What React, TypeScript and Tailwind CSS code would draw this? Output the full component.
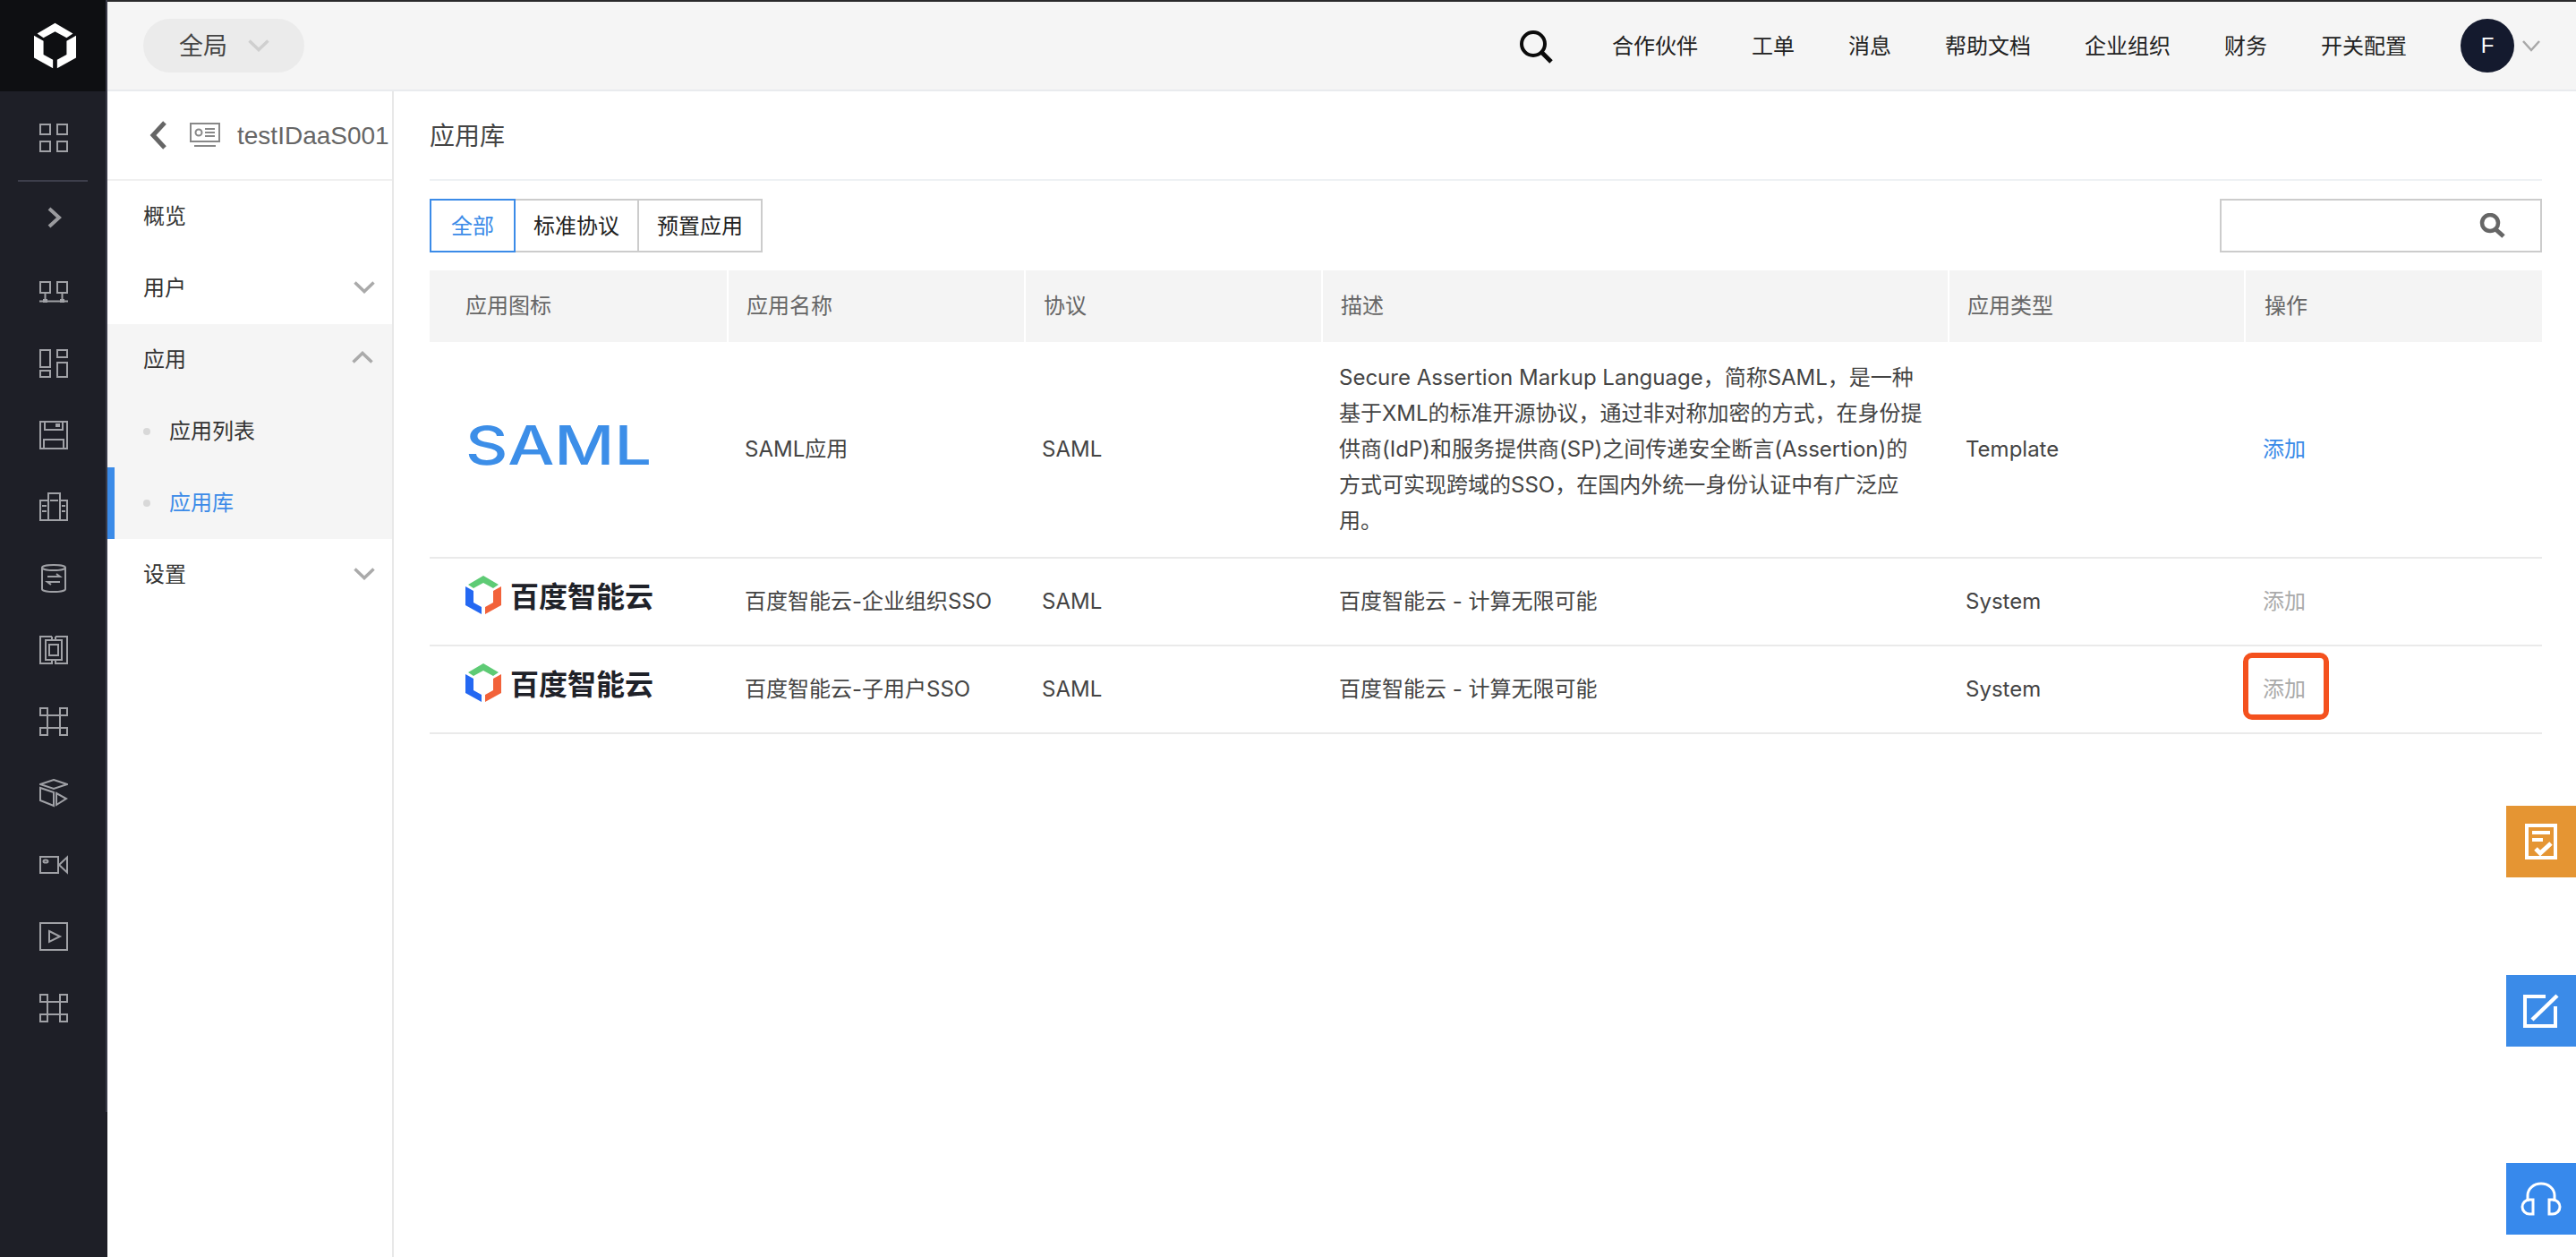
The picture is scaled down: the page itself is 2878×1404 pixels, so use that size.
import React from "react";

const S = ({ children }: { children: React.ReactNode }) => (
  <svg width="32" height="32" viewBox="0 0 32 32" fill="none" stroke="#a0a1a6" strokeWidth="2">
    {children}
  </svg>
);

const CmdIcon = () => (
  <S>
    <rect x="1" y="1" width="8" height="8" />
    <rect x="23" y="1" width="8" height="8" />
    <rect x="1" y="23" width="8" height="8" />
    <rect x="23" y="23" width="8" height="8" />
    <path d="M9 9H23V23H9Z" />
  </S>
);

const railIcons: React.ReactNode[] = [
  <S key="net">
    <rect x="1" y="5" width="11" height="12" />
    <rect x="20" y="5" width="11" height="12" />
    <path d="M6.5 17V26M25.5 17V26M0 26.5H32" />
    <rect x="4" y="24" width="5" height="4" fill="#a0a1a6" stroke="none" />
    <rect x="23" y="24" width="5" height="4" fill="#a0a1a6" stroke="none" />
  </S>,
  <S key="dash">
    <rect x="1" y="1" width="11" height="19" />
    <rect x="1" y="24" width="11" height="7" />
    <rect x="20" y="1" width="11" height="8" />
    <rect x="20" y="15" width="11" height="16" />
  </S>,
  <S key="floppy">
    <rect x="1" y="1" width="30" height="30" />
    <path d="M6 1V10H26V1M5 31V21H27V31" />
    <rect x="18" y="3" width="5" height="4" fill="#a0a1a6" stroke="none" />
  </S>,
  <S key="building">
    <rect x="10" y="1" width="13" height="30" />
    <path d="M10 9H1V31H10M23 9H31V31H23M12 9H21M3 15H8M3 21H8M25 15H29M25 21H29" />
  </S>,
  <S key="db">
    <ellipse cx="16" cy="4" rx="13" ry="3" />
    <path d="M3 4V28A13 3 0 0 0 29 28V4M9 14H23L19 11M23 20H9L13 23" />
  </S>,
  <S key="concentric">
    <path d="M14 1H1V31H14V27M18 1H31V31H18V27M14 1V5M18 1V5" />
    <rect x="7" y="5" width="18" height="22" />
    <rect x="11" y="10" width="10" height="12" />
  </S>,
  <CmdIcon key="cmd1" />,
  <S key="box">
    <path d="M16 1L31 6L16 11L1 6Z" />
    <path d="M1 10V24L16 30V15Z" />
    <path d="M19 16L30 22L19 29Z" />
  </S>,
  <S key="cam">
    <rect x="1" y="7" width="20" height="18" />
    <ellipse cx="7" cy="12" rx="2.5" ry="1.6" />
    <path d="M22 16L31 7.5V24.5Z" />
  </S>,
  <S key="play">
    <rect x="1" y="1" width="30" height="30" />
    <path d="M11 10L23 16L11 22Z" />
  </S>,
  <CmdIcon key="cmd2" />,
];

const Chevron = ({ up, cls }: { up?: boolean; cls: string }) => (
  <svg width="24" height="14" viewBox="0 0 24 14" fill="none" stroke="currentColor" strokeWidth="3.5" className={cls}>
    <path d={up ? "M1.5 12.5L12 2.5L22.5 12.5" : "M1.5 1.5L12 11.5L22.5 1.5"} />
  </svg>
);

const HexMark = ({ w, h, top, left, right }: { w: number; h: number; top: string; left: string; right: string }) => (
  <svg width={w} height={h} viewBox="0 0 40 43" className="shrink-0">
    <path d="M20 0L37 10L31 14L20 8L9 14L3 10Z" fill={top} />
    <path d="M0 12L9 17V30L18 35V43L0 33Z" fill={left} />
    <path d="M40 12L31 17V30L22 35V43L40 33Z" fill={right} />
  </svg>
);

const BaiduLogo = () => (
  <div className="flex items-center gap-[10px] pb-[16px] pl-10">
    <HexMark w={40} h={43} top="#5ecb75" left="#2468f2" right="#f2623a" />
    <span className="text-[32px] leading-none font-bold text-[#1f2229] font-['Noto_Sans_CJK_SC',sans-serif]">
      百度智能云
    </span>
  </div>
);

const SamlLogo = () => (
  <div className="pb-[10px] pl-10">
    <svg width="212" height="64" viewBox="0 0 212 64" className="overflow-visible">
      <text
        x="0"
        y="54"
        textLength="208"
        lengthAdjust="spacingAndGlyphs"
        fontSize="60"
        fontWeight="500"
        fontFamily="Inter, sans-serif"
        fill="#3c8ee8"
      >
        SAML
      </text>
    </svg>
  </div>
);

const cols = "grid grid-cols-[334px_332px_332px_700px_331px_331px]";
const cell = "flex items-center pl-[18px]";

const rows = [
  {
    h: "h-[242px]",
    logo: <SamlLogo />,
    name: "SAML应用",
    desc: "Secure Assertion Markup Language，简称SAML，是一种基于XML的标准开源协议，通过非对称加密的方式，在身份提供商(IdP)和服务提供商(SP)之间传递安全断言(Assertion)的方式可实现跨域的SSO，在国内外统一身份认证中有广泛应用。",
    type: "Template",
    active: true,
  },
  {
    h: "h-[98px]",
    logo: <BaiduLogo />,
    name: "百度智能云-企业组织SSO",
    desc: "百度智能云 - 计算无限可能",
    type: "System",
    active: false,
  },
  {
    h: "h-[98px]",
    logo: <BaiduLogo />,
    name: "百度智能云-子用户SSO",
    desc: "百度智能云 - 计算无限可能",
    type: "System",
    active: false,
    boxed: true,
  },
];

const navItems = ["合作伙伴", "工单", "消息", "帮助文档", "企业组织", "财务", "开关配置"];
const heads: [string, string][] = [
  ["应用图标", "pl-10"],
  ["应用名称", "pl-5"],
  ["协议", "pl-5"],
  ["描述", "pl-5"],
  ["应用类型", "pl-5"],
  ["操作", "pl-[21px]"],
];

export default function App() {
  return (
    <div className="relative flex h-[1404px] w-[2878px] overflow-hidden bg-white font-['Liberation_Sans','Noto_Sans_CJK_SC',sans-serif] text-[24px] text-[#333]">
      {/* icon rail */}
      <aside className="h-full w-[120px] shrink-0 bg-[#1e1f27]">
        <div className="flex h-[1242px] flex-col border-r-[2px] border-[#3a3b48]">
          <div className="flex h-[102px] shrink-0 items-center justify-center bg-[#0e0f12] pl-[5px]">
            <HexMark w={47} h={52} top="#fff" left="#fff" right="#fff" />
          </div>
          <div className="mt-3 flex h-[80px] items-center justify-center pl-[2px]">
            <S>
              <rect x="1" y="1" width="11" height="11" />
              <rect x="20" y="1" width="11" height="11" />
              <rect x="1" y="20" width="11" height="11" />
              <rect x="20" y="20" width="11" height="11" />
            </S>
          </div>
          <div className="mx-5 mt-[7px] h-[2px] bg-[#3d3e4b]" />
          <div className="flex h-[80px] items-center justify-center pl-[4px]">
            <svg width="16" height="24" viewBox="0 0 16 24" fill="none" stroke="#9a9a9e" strokeWidth="4">
              <path d="M2 2L13 12L2 22" />
            </svg>
          </div>
          <div className="mt-[3px] flex flex-col">
            {railIcons.map((ic, i) => (
              <div key={i} className="flex h-[80px] items-center justify-center pl-[2px]">
                {ic}
              </div>
            ))}
          </div>
        </div>
      </aside>

      <div className="flex h-full min-w-0 flex-1 flex-col">
        <div className="h-[2px] shrink-0 bg-[#2a2a2c]" />
        {/* top bar */}
        <header className="flex h-[100px] shrink-0 items-center border-b-[2px] border-[#e9ebee] bg-[#f5f5f5] pl-10 pr-10">
          <div className="flex h-[60px] w-[180px] items-center rounded-full bg-[#ebebeb] pl-10">
            <span className="pt-[2px] text-[27px] leading-none text-[#444]">全局</span>
            <Chevron cls="ml-[23px] text-[#cfcfcf]" />
          </div>
          <svg width="37" height="37" viewBox="0 0 37 37" fill="none" stroke="#0b0b0b" className="ml-auto mt-[2px]">
            <circle cx="15" cy="15" r="13" strokeWidth="4" />
            <path d="M24 24L35 35" strokeWidth="5" />
          </svg>
          <nav className="ml-[66px] flex items-center gap-[60px]">
            {navItems.map((t) => (
              <span key={t} className="pt-[2px] leading-none text-[#222]">
                {t}
              </span>
            ))}
            <div className="flex items-center">
              <div className="flex h-[60px] w-[60px] items-center justify-center rounded-full bg-[#141a2e] text-white">
                F
              </div>
              <svg width="20" height="13" viewBox="0 0 20 13" fill="none" stroke="#a8a8a8" strokeWidth="2.5" className="ml-[9px]">
                <path d="M1 1L10 11L19 1" />
              </svg>
            </div>
          </nav>
        </header>

        <div className="flex min-h-0 flex-1">
          {/* secondary nav */}
          <div className="w-[320px] shrink-0 border-r-[2px] border-[#e8e8e8]">
            <div className="flex h-[100px] items-center border-b-[2px] border-[#f0f0f0] pl-[47px]">
              <svg width="20" height="32" viewBox="0 0 20 32" fill="none" stroke="#666" strokeWidth="5">
                <path d="M17 2L4 16L17 30" />
              </svg>
              <svg width="34" height="28" viewBox="0 0 34 28" fill="none" stroke="#888" strokeWidth="2" className="ml-[25px]">
                <rect x="1" y="1" width="32" height="20" />
                <circle cx="10" cy="11" r="3.5" />
                <path d="M17 7H28M17 11H28M17 15H28M5 26H29" />
              </svg>
              <span className="ml-[19px] whitespace-nowrap pt-[2px] text-[28px] leading-none text-[#666]">testIDaaS001</span>
            </div>
            <div className="flex h-[80px] items-center pl-10">概览</div>
            <div className="flex h-[80px] items-center justify-between pl-10 pr-[19px]">
              用户
              <Chevron cls="mb-[3px] text-[#aaa]" />
            </div>
            <div className="bg-[#f5f5f5]">
              <div className="flex h-[80px] items-center justify-between pl-10 pr-[21px]">
                应用
                <Chevron up cls="mb-[6px] text-[#aaa]" />
              </div>
              <div className="flex h-[80px] items-center pl-10">
                <span className="h-2 w-2 rounded-full bg-[#d8d8d8]" />
                <span className="ml-[21px]">应用列表</span>
              </div>
              <div className="flex h-[80px] items-center border-l-[8px] border-[#3b8be8] pl-8 text-[#3b8be8]">
                <span className="h-2 w-2 rounded-full bg-[#d8d8d8]" />
                <span className="ml-[21px]">应用库</span>
              </div>
            </div>
            <div className="flex h-[80px] items-center justify-between pl-10 pr-[19px]">
              设置
              <Chevron cls="mb-[3px] text-[#aaa]" />
            </div>
          </div>

          {/* main */}
          <main className="min-w-0 flex-1 pl-10 pr-[38px]">
            <div className="flex h-[100px] items-center border-b-[2px] border-[#eef1f4] pt-[3px] text-[28px] text-[#444]">
              应用库
            </div>
            <div className="mt-5 flex items-center justify-between">
              <div className="flex h-[60px]">
                <div className="z-10 flex w-[96px] items-center justify-center border-[2px] border-[#3b8be8] pt-[2px] text-[#3b8be8]">
                  全部
                </div>
                <div className="flex w-[138px] items-center justify-center border-y-[2px] border-r-[2px] border-[#ccc] pt-[2px] text-[#222]">
                  标准协议
                </div>
                <div className="-ml-[2px] flex w-[140px] items-center justify-center border-[2px] border-[#ccc] pt-[2px] text-[#222]">
                  预置应用
                </div>
              </div>
              <div className="flex h-[60px] w-[360px] items-center justify-end border-[2px] border-[#ccc] pr-[38px]">
                <svg width="30" height="28" viewBox="0 0 30 28" fill="none" stroke="#666">
                  <circle cx="12" cy="11" r="9" strokeWidth="4.5" />
                  <path d="M18 18L27 26" strokeWidth="5" />
                </svg>
              </div>
            </div>

            <div className="mt-5 grid h-[80px] grid-cols-[332px_330px_330px_698px_329px_331px] gap-x-[2px]">
              {heads.map(([t, p]) => (
                <div key={t} className={`flex items-center bg-[#f4f4f4] text-[#666] ${p}`}>
                  {t}
                </div>
              ))}
            </div>

            {rows.map((r) => (
              <div
                key={r.name}
                className={`${cols} ${r.h} border-b-[2px] border-[#eaeaea] font-['Inter','Noto_Sans_CJK_SC',sans-serif] text-[#444]`}
              >
                <div className="flex items-center">{r.logo}</div>
                <div className={cell}>{r.name}</div>
                <div className={cell}>SAML</div>
                <div className={`${cell} leading-[40px]`}>
                  <p className="w-[652px]">{r.desc}</p>
                </div>
                <div className={cell}>{r.type}</div>
                <div className="relative flex items-center pl-[19px]">
                  <span className={r.active ? "text-[#3b8be8]" : "text-[#aaa]"}>添加</span>
                  {r.boxed && (
                    <span className="absolute -left-[3px] top-[7px] h-[75px] w-[96px] rounded-[10px] border-[6px] border-[#f4511e]" />
                  )}
                </div>
              </div>
            ))}
          </main>
        </div>
      </div>

      {/* floating tabs */}
      <div className="absolute right-0 top-[900px] flex h-[80px] w-[78px] items-center justify-center bg-[#e59533]">
        <svg width="36" height="40" viewBox="0 0 36 40" fill="none" stroke="#fff" strokeWidth="4">
          <rect x="2" y="2" width="32" height="36" />
          <path d="M8 10H28M8 18H20" />
          <path d="M12 28L17 33L29 22" strokeWidth="5" />
        </svg>
      </div>
      <div className="absolute right-0 top-[1089px] flex h-[80px] w-[78px] items-center justify-center bg-[#3b8be8]">
        <svg width="40" height="38" viewBox="0 0 40 38" fill="none" stroke="#fff" strokeWidth="4">
          <path d="M25 3H2V36H36V14" />
          <path d="M10 29L38 2" strokeWidth="4.5" />
        </svg>
      </div>
      <div className="absolute right-0 top-[1299px] flex h-[80px] w-[78px] items-center justify-center bg-[#3789ec]">
        <svg width="50" height="38" viewBox="0 0 50 38" fill="none" stroke="#fff" strokeWidth="3">
          <path d="M10 22V15A15 13 0 0 1 40 15V22" />
          <path d="M16 20H12A8 8 0 0 0 12 36H16Z" />
          <path d="M34 20H38A8 8 0 0 1 38 36H34Z" />
        </svg>
      </div>
    </div>
  );
}
